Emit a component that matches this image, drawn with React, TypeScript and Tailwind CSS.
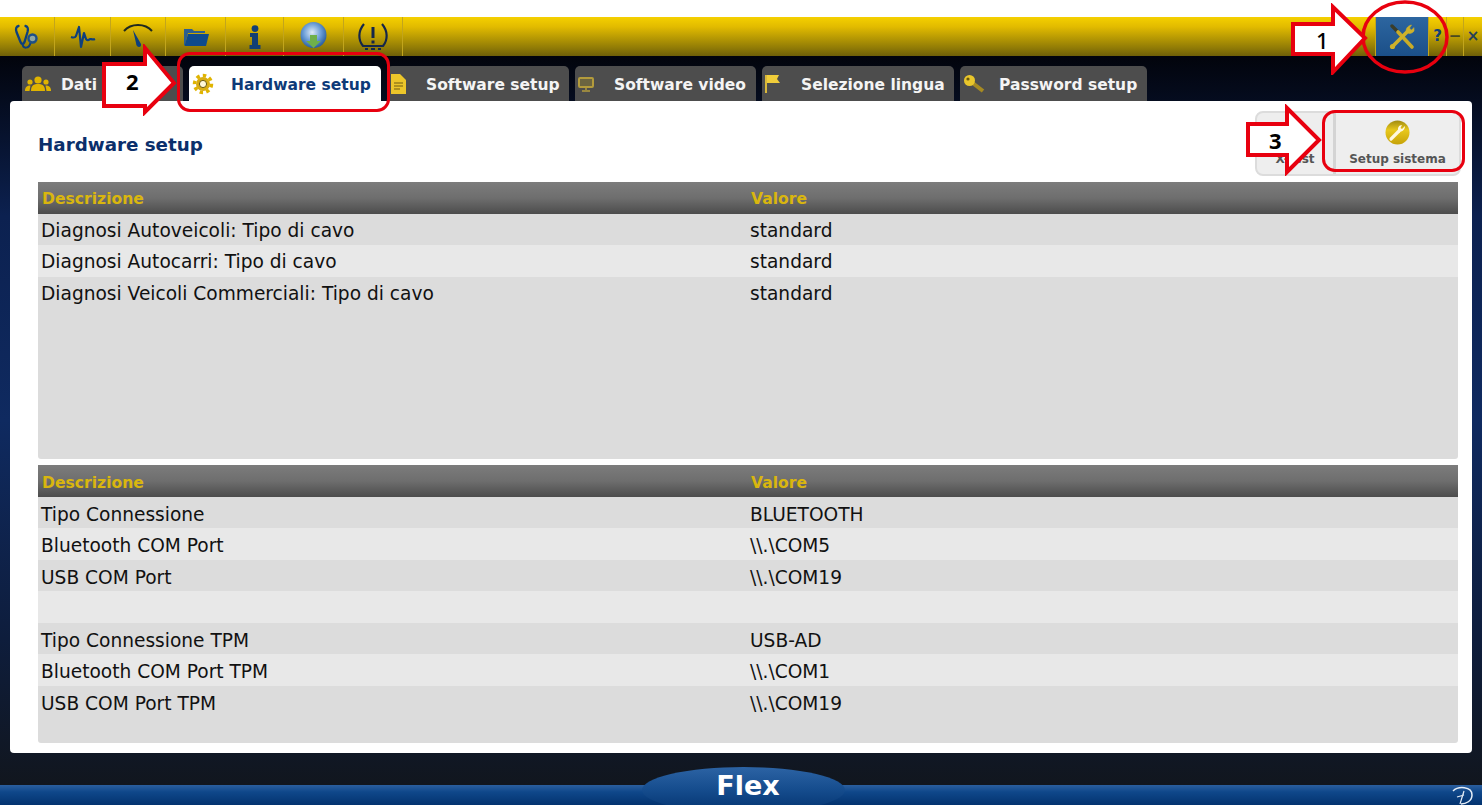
import React from "react";

const Y = "#e0b400";

function Stetho() {
  return (
    <svg width="26" height="26" viewBox="0 0 26 26" fill="none" stroke="#0d3f7c" strokeWidth="2.3" strokeLinecap="round">
      <path d="M4.5 2 C2 2.5 1.5 5 2.5 8 L6.5 18 C7.5 20.5 9.5 20.5 10.5 18 L13.5 8 C14.3 5 14 2.5 11.5 2" />
      <path d="M8.5 20 C9 25 15 25 16.5 19" strokeWidth="2" />
      <circle cx="18.5" cy="14.5" r="4" stroke="#1d4f86" strokeWidth="2.4" fill="#8fa6a0" />
    </svg>
  );
}
function Pulse() {
  return (
    <svg width="26" height="24" viewBox="0 0 26 24" fill="none" stroke="#0d3f7c" strokeWidth="2.2" strokeLinejoin="round">
      <path d="M1 12 C4 13 5 13 6 11 L9 2 L11 22 L14 8 L16 14 C17 16 19 15 20 14 C21 14 23 15 25 14" />
    </svg>
  );
}
function Gauge() {
  return (
    <svg width="30" height="28" viewBox="0 0 30 28" fill="none">
      <path d="M1 8 C8 0 22 0 29 8" stroke="#1f2a20" strokeWidth="2" />
      <path d="M10 7 L13 20 C13 25 19 25 18 21 Z" fill="#0d3f7c" />
    </svg>
  );
}
function Folder() {
  return (
    <svg width="26" height="20" viewBox="0 0 26 20">
      <path d="M1 2 H9 L11 4 H22 V6 H5 L2 18 L1 18 Z" fill="#2c5f90" />
      <path d="M5 7 H26 L23 19 H1.5 Z" fill="#0e4a8c" />
    </svg>
  );
}
function InfoI() {
  return (
    <svg width="14" height="24" viewBox="0 0 14 24" fill="#123f74">
      <circle cx="7" cy="3.6" r="3.4" />
      <path d="M2 8 H10 V20 H12.5 V24 H1.5 V20 H4 V12 H2 Z" />
    </svg>
  );
}
function Globe() {
  return (
    <svg width="30" height="32" viewBox="0 0 30 32">
      <defs>
        <radialGradient id="gl" cx="45%" cy="40%" r="60%">
          <stop offset="0%" stopColor="#dfeaf5" />
          <stop offset="55%" stopColor="#6d9fd8" />
          <stop offset="100%" stopColor="#2a5f9f" />
        </radialGradient>
      </defs>
      <circle cx="14.5" cy="14" r="13" fill="url(#gl)" />
      <path d="M11 14 H18 V20 H22 L14.5 27 L7 20 H11 Z" fill="#6fb04a" />
    </svg>
  );
}
function Tire() {
  return (
    <svg width="32" height="28" viewBox="0 0 32 28" fill="none" stroke="#14264a" strokeWidth="2.2">
      <path d="M7 1 C1 8 1 17 6 23 H26 C31 17 31 8 25 1" />
      <path d="M16 4 V15" strokeWidth="3" />
      <path d="M16 17.5 V20.5" strokeWidth="3" />
      <path d="M8 26 H11 M14 26 H18 M21 26 H24" strokeWidth="2" />
    </svg>
  );
}
function Tools() {
  return (
    <svg width="28" height="26" viewBox="0 0 28 26" fill="none" strokeLinecap="round">
      <path d="M4 2 L9 7" stroke="#3a3d2a" strokeWidth="3.4" />
      <path d="M10 8 L24 23" stroke="#c9ac28" strokeWidth="3.6" />
      <path d="M20 7 L5 22" stroke="#cfb22a" strokeWidth="3.6" />
      <circle cx="4.5" cy="22.5" r="2.6" fill="#cfb22a" />
      <path d="M26 4 L26 7 C24 10 20 10 18.5 8 C17.5 5.5 19 2 23.5 1 L21.5 4 L23 6 Z" fill="#cfb22a" stroke="#cfb22a" strokeWidth="0.6" />
    </svg>
  );
}

function People() {
  return (
    <svg width="26" height="16" viewBox="0 0 26 16" fill={Y}>
      <circle cx="13" cy="4" r="3.6" />
      <path d="M6 15 C6 9 9 8 13 8 C17 8 20 9 20 15 Z" />
      <circle cx="5" cy="6" r="2.6" />
      <path d="M0 15 C0 11 2 9.5 5.5 9.5 L4.5 15 Z" />
      <circle cx="21" cy="6" r="2.6" />
      <path d="M26 15 C26 11 24 9.5 20.5 9.5 L21.5 15 Z" />
    </svg>
  );
}
function Cog() {
  return (
    <svg width="22" height="22" viewBox="0 0 22 22">
      <circle cx="11" cy="11" r="8.5" fill="none" stroke={Y} strokeWidth="3.5" strokeDasharray="3.4 3.2" />
      <circle cx="11" cy="11" r="7" fill="#d9ad12" />
      <circle cx="11" cy="11" r="3.6" fill="#fff7d8" stroke="#6b5a10" strokeWidth="1" />
    </svg>
  );
}
function Doc() {
  return (
    <svg width="16" height="20" viewBox="0 0 16 20">
      <path d="M1 0 H10 L16 6 V20 H1 Z" fill="#ecc62a" />
      <path d="M4 9 H13 M4 12 H13 M4 15 H10" stroke="#6f5c12" strokeWidth="1.2" />
    </svg>
  );
}
function Monitor() {
  return (
    <svg width="16" height="15" viewBox="0 0 16 15" fill="none">
      <rect x="1" y="1" width="14" height="9" rx="1" stroke="#b39b3c" strokeWidth="2" fill="#6b6440" />
      <path d="M8 10 V13 M4 14 H12" stroke="#b39b3c" strokeWidth="1.5" />
    </svg>
  );
}
function Flag() {
  return (
    <svg width="16" height="20" viewBox="0 0 16 20">
      <path d="M1 1 V19" stroke="#d9b83a" strokeWidth="2" />
      <path d="M2 1 H14 L12 5 L15 9 H2 Z" fill="#f0cd3a" />
    </svg>
  );
}
function Key() {
  return (
    <svg width="22" height="20" viewBox="0 0 22 20" fill="none">
      <path d="M7 7 L20 17" stroke="#a68a22" strokeWidth="4" />
      <circle cx="6.5" cy="6.5" r="5.5" fill="#e9c62b" />
      <circle cx="5" cy="5" r="1.6" fill="#6a5a10" />
    </svg>
  );
}

const toolbarCells: { w: number; icon: React.ReactNode }[] = [
  { w: 55, icon: <Stetho /> },
  { w: 56, icon: <Pulse /> },
  { w: 55, icon: <Gauge /> },
  { w: 60, icon: <Folder /> },
  { w: 58, icon: <InfoI /> },
  { w: 60, icon: <Globe /> },
  { w: 59, icon: <Tire /> },
];

const tabs: { label: string; w: number; icon: React.ReactNode; active?: boolean }[] = [
  { label: "Dati", w: 161, icon: <People /> },
  { label: "Hardware setup", w: 192, icon: <Cog />, active: true },
  { label: "Software setup", w: 182, icon: <Doc /> },
  { label: "Software video", w: 181, icon: <Monitor /> },
  { label: "Selezione lingua", w: 192, icon: <Flag /> },
  { label: "Password setup", w: 187, icon: <Key /> },
];

function DataTable({ rows, className, lower }: { rows: [string, string][]; className: string; lower?: boolean }) {
  return (
    <div className={`bg-[#dcdcdc] rounded-b-[3px] ${className}`}>
      <div className={`flex h-[31.5px] items-center bg-[linear-gradient(to_bottom,#7c7c7c,#6e6e6e_50%,#4c4c4c)] text-[15.6px] font-bold text-[#d9b60e] ${lower ? "pt-[5px]" : "pt-[3px]"}`}>
        <span className="w-[713px] pl-[4px]">Descrizione</span>
        <span>Valore</span>
      </div>
      {rows.map(([a, b], i) => (
        <div
          key={i}
          className={`flex h-[31.5px] items-center text-[18.6px] text-[#111] ${lower ? "pt-[5px]" : "pt-[3px]"} ${i % 2 === 1 ? "bg-[#e8e8e8]" : "bg-[#dcdcdc]"}`}
        >
          <span className="w-[712px] pl-[3px]">{a}</span>
          <span>{b}</span>
        </div>
      ))}
    </div>
  );
}

function Arrow({ className, w, h, d }: { className: string; w: number; h: number; d: string }) {
  return (
    <svg className={className} width={w} height={h} viewBox={`0 0 ${w} ${h}`}>
      <path d={d} fill="#fff" stroke="#e8000f" strokeWidth="4" strokeLinejoin="miter" />
    </svg>
  );
}

export default function App() {
  return (
    <div className="relative flex h-[805px] w-[1482px] flex-col overflow-hidden bg-white font-['DejaVu_Sans','Liberation_Sans',sans-serif]">
      <div className="h-[17px] bg-white" />

      <div className="flex h-[39px] items-stretch justify-between bg-[linear-gradient(to_bottom,#f5d000,#e2bb00_25%,#8f7a06_80%,#6f5f08)]">
        <div className="flex">
          {toolbarCells.map((c, i) => (
            <div
              key={i}
              style={{ width: c.w }}
              className="flex items-center justify-center border-r border-[#c2a51c]"
            >
              {c.icon}
            </div>
          ))}
        </div>
        <div className="flex">
          <div className="flex w-[54px] items-center justify-center border-x border-[#c2a51c] bg-[linear-gradient(to_bottom,#2d66a0,#1b4f88)]">
            <Tools />
          </div>
          <div className="flex w-[18px] items-center justify-center border-r border-[#c2a51c] text-[15px] font-bold text-[#123f74]">?</div>
          <div className="flex w-[17px] items-center justify-center border-r border-[#c2a51c] text-[15px] font-bold text-[#4a4a20]">−</div>
          <div className="flex w-[18px] items-center justify-center text-[15px] font-bold text-[#23405a]">×</div>
        </div>
      </div>

      <div className="flex flex-1 flex-col bg-[linear-gradient(to_bottom,#02040c,#0c2150_22%,#0f2a60_50%,#0e1d3c_80%,#11161e)] px-[10px]">
        <div className="flex h-[45px] items-end gap-[6px] pl-[12px]">
          {tabs.map((t) => (
            <div
              key={t.label}
              style={{ width: t.w }}
              className={`flex h-[35px] items-center rounded-t-[5px] pt-[1px] text-[15.5px] font-bold ${t.active ? "bg-white text-[#0e3a78]" : "bg-[#4d4d4d] text-[#f4f4f4]"}`}
            >
              <span className="flex w-[38px] shrink-0 items-center justify-start pl-[3px]">{t.icon}</span>
              <span className={`whitespace-nowrap pt-[3px] ${t.active ? "pl-[4px]" : "pl-[1px]"}`}>{t.label}</span>
            </div>
          ))}
        </div>

        <div className="flex h-[652px] flex-col rounded-[4px] bg-white pl-[28px] pr-[14px]">
          <div className="flex h-[81px] items-start justify-between">
            <h1 className="pt-[33px] text-[18.3px] font-bold leading-[22px] text-[#0b2f6b]">Hardware setup</h1>
            <div className="-mr-[3px] mt-[10px] flex h-[65px] w-[206px] rounded-[8px] border-2 border-[#dcdcdc] bg-[#eeeeee] text-[12px] font-bold text-[#555]">
              <div className="flex w-[79px] flex-col items-center justify-end border-r-[3px] border-[#d4d4d4] pb-[6px]">X-Test</div>
              <div className="flex flex-1 flex-col items-center justify-end pb-[6px]">
                <svg width="25" height="25" viewBox="0 0 25 25" className="mb-[5px]">
                  <defs>
                    <linearGradient id="wr" x1="0" y1="0" x2="0" y2="1">
                      <stop offset="0%" stopColor="#a08a10" />
                      <stop offset="40%" stopColor="#e8c81c" />
                      <stop offset="100%" stopColor="#c6a208" />
                    </linearGradient>
                  </defs>
                  <circle cx="12.5" cy="12.5" r="12" fill="url(#wr)" />
                  <path d="M6 19 L14 11" stroke="#fff8e0" strokeWidth="3.2" strokeLinecap="round" />
                  <path d="M20 6 L17 9 L15.5 8 L17 5 C14 5 12 8 13.5 11 C16 13 20 10 20 6 Z" fill="#fff8e0" />
                </svg>
                <span>Setup sistema</span>
              </div>
            </div>
          </div>
          <DataTable
            className="h-[277px]"
            rows={[
              ["Diagnosi Autoveicoli: Tipo di cavo", "standard"],
              ["Diagnosi Autocarri: Tipo di cavo", "standard"],
              ["Diagnosi Veicoli Commerciali: Tipo di cavo", "standard"],
            ]}
          />
          <div className="h-[6px]" />
          <DataTable
            lower
            className="h-[278px]"
            rows={[
              ["Tipo Connessione", "BLUETOOTH"],
              ["Bluetooth COM Port", "\\\\.\\COM5"],
              ["USB COM Port", "\\\\.\\COM19"],
              ["\u00A0", ""],
              ["Tipo Connessione TPM", "USB-AD"],
              ["Bluetooth COM Port TPM", "\\\\.\\COM1"],
              ["USB COM Port TPM", "\\\\.\\COM19"],
            ]}
          />
        </div>
      </div>

      <div className="relative h-[20px] bg-[linear-gradient(to_bottom,#2b5f9e,#0f478a_35%,#03336f)]">
        <div className="absolute left-[642px] top-[-18px] flex h-[46px] w-[203px] items-start justify-center rounded-[50%] bg-[linear-gradient(to_bottom,#2c63a4,#154c8d_50%,#03336f)]">
          <span className="pl-[9px] pt-[1px] text-[27px] font-bold leading-[36px] text-white">Flex</span>
        </div>
        <svg className="absolute left-[1452px] top-[1px]" width="22" height="19" viewBox="0 0 22 19" fill="none" stroke="#e6eef7" strokeWidth="1.5">
          <path d="M1 5 C6 0 20 0 20 9 C20 15 14 18 9 18" />
          <path d="M12 5 L8 18 M5 11 L12 9" strokeWidth="1.2" />
        </svg>
      </div>

      {/* Annotations laid over the screenshot */}
      <svg className="absolute left-[1360px] top-[0px]" width="92" height="76" viewBox="0 0 92 76" fill="none">
        <ellipse cx="45" cy="37" rx="42" ry="35" stroke="#e8000f" strokeWidth="3.5" />
      </svg>
      <div className="absolute left-[177px] top-[52px] h-[60px] w-[213px] rounded-[13px] border-[3px] border-[#e8000f]" />
      <div className="absolute left-[1322px] top-[110px] h-[62px] w-[143px] rounded-[13px] border-[3px] border-[#e8000f]" />

      <Arrow className="absolute left-[1290px] top-[3px]" w={80} h={72} d="M3 21 H43 V4 L75 35 L43 69 V51 H3 Z" />
      <Arrow className="absolute left-[101px] top-[44px]" w={78} h={72} d="M3 20 H44 V4 L73 39 L44 68 V62 H3 Z" />
      <Arrow className="absolute left-[1245px] top-[104px]" w={78} h={72} d="M3 20 H42 V4 L74 36 L42 68 V51 H3 Z" />

      <span className="absolute left-[1316px] top-[27px] font-['Noto_Sans',sans-serif] text-[22px] font-medium leading-[26px] text-black">1</span>
      <span className="absolute left-[126px] top-[68px] font-['Noto_Sans',sans-serif] text-[22px] font-bold leading-[26px] text-black">2</span>
      <span className="absolute left-[1269px] top-[127px] font-['Noto_Sans',sans-serif] text-[22px] font-bold leading-[26px] text-black">3</span>
    </div>
  );
}
